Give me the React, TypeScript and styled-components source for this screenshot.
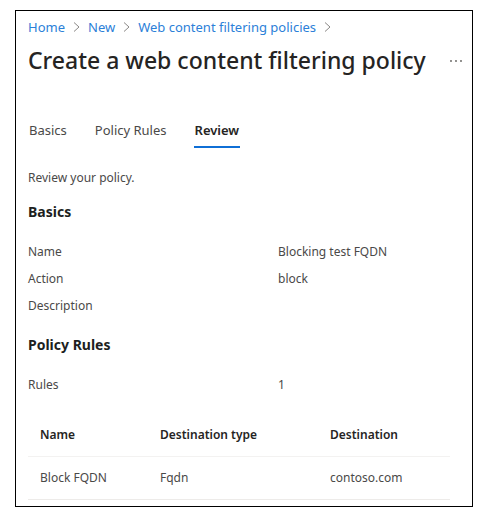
import React from "react";
import styled, { createGlobalStyle } from "styled-components";

const GlobalStyle = createGlobalStyle`
  *, *::before, *::after { box-sizing: border-box; }
  body {
    margin: 0;
    background: #fff;
    color: #4a4948;
    font-family: "Segoe UI", "Noto Sans", sans-serif;
    font-size: 12px;
    line-height: 20px;
  }
`;

const Panel = styled.main`
  margin: 10px 8px 4px 15px;
  border: 1px solid #000;
  padding: 5px 8px 6px 12px;
`;

const Breadcrumb = styled.nav`
  display: flex;
  align-items: center;
  font-size: 13px;
  line-height: 22px;
`;

const Crumb = styled.a`
  color: #2b80d8;
  text-decoration: none;
  white-space: nowrap;
`;

const Chevron = styled.svg`
  flex: none;
  width: 7px;
  height: 10px;
  margin: 0 8px;
  fill: none;
  stroke: #8a8886;
`;

const TitleRow = styled.header`
  display: flex;
  align-items: center;
  justify-content: space-between;
`;

const Title = styled.h1`
  margin: 0;
  color: #252423;
  font-size: 23px;
  font-weight: 500;
  line-height: 44px;
  white-space: nowrap;
`;

const MoreButton = styled.button`
  display: flex;
  border: 0;
  padding: 6px 2px 4px;
  background: none;
  color: #605e5c;
`;

const TabList = styled.div`
  display: flex;
  gap: 26px;
  margin-top: 38px;
`;

const Tab = styled.button<{ $active?: boolean }>`
  border: 0;
  border-bottom: 2px solid ${(p) => (p.$active ? "#0f6fd6" : "transparent")};
  padding: 0 1px 6px;
  background: none;
  color: ${(p) => (p.$active ? "#252423" : "#4a4948")};
  font: inherit;
  font-size: 13px;
  font-weight: ${(p) => (p.$active ? 600 : 400)};
  white-space: nowrap;
`;

const Intro = styled.p`
  margin: 20px 0 13px;
`;

const SectionTitle = styled.h2`
  margin: 0;
  color: #201f1e;
  font-size: 14px;
  font-weight: 700;
  line-height: 22px;
`;

const Details = styled.dl`
  display: grid;
  grid-template-columns: 250px 1fr;
  row-gap: 7px;
  margin: 19px 0 18px;
`;

const Term = styled.dt`
  min-height: 20px;
`;

const Value = styled.dd`
  margin: 0;
`;

const RulesTable = styled.table`
  width: calc(100% - 14px);
  border-collapse: collapse;
  table-layout: fixed;
`;

const Column = styled.col<{ $width?: number }>`
  width: ${(p) => (p.$width ? `${p.$width}px` : "auto")};
`;

const HeadCell = styled.th`
  height: 43px;
  border-bottom: 1px solid #f3f2f1;
  padding: 2px 0 0 12px;
  color: #252423;
  font-weight: 600;
  text-align: left;
`;

const Cell = styled.td`
  height: 43px;
  border-bottom: 1px solid #edebe9;
  padding: 0 0 0 12px;
`;

const crumbs = ["Home", "New", "Web content filtering policies"];
const tabs = ["Basics", "Policy Rules", "Review"];
const basics = [
  ["Name", "Blocking test FQDN"],
  ["Action", "block"],
  ["Description", ""],
];

export default function App() {
  return (
    <>
      <GlobalStyle />
      <Panel>
        <Breadcrumb aria-label="Breadcrumb">
          {crumbs.map((crumb) => (
            <React.Fragment key={crumb}>
              <Crumb href="#">{crumb}</Crumb>
              <Chevron viewBox="0 0 7 10" aria-hidden="true">
                <path d="M1 .5 6 5 1 9.5" />
              </Chevron>
            </React.Fragment>
          ))}
        </Breadcrumb>
        <TitleRow>
          <Title>Create a web content filtering policy</Title>
          <MoreButton type="button" aria-label="More options">
            <svg width="12" height="2" viewBox="0 0 12 2" fill="currentColor" aria-hidden="true">
              <circle cx="1" cy="1" r=".9" />
              <circle cx="6" cy="1" r=".9" />
              <circle cx="11" cy="1" r=".9" />
            </svg>
          </MoreButton>
        </TitleRow>
        <TabList role="tablist">
          {tabs.map((tab) => (
            <Tab key={tab} type="button" role="tab" aria-selected={tab === "Review"} $active={tab === "Review"}>
              {tab}
            </Tab>
          ))}
        </TabList>
        <Intro>Review your policy.</Intro>
        <SectionTitle>Basics</SectionTitle>
        <Details>
          {basics.map(([term, value]) => (
            <React.Fragment key={term}>
              <Term>{term}</Term>
              <Value>{value}</Value>
            </React.Fragment>
          ))}
        </Details>
        <SectionTitle>Policy Rules</SectionTitle>
        <Details>
          <Term>Rules</Term>
          <Value>1</Value>
        </Details>
        <RulesTable>
          <colgroup>
            <Column $width={120} />
            <Column $width={170} />
            <Column />
          </colgroup>
          <thead>
            <tr>
              <HeadCell scope="col">Name</HeadCell>
              <HeadCell scope="col">Destination type</HeadCell>
              <HeadCell scope="col">Destination</HeadCell>
            </tr>
          </thead>
          <tbody>
            <tr>
              <Cell>Block FQDN</Cell>
              <Cell>Fqdn</Cell>
              <Cell>contoso.com</Cell>
            </tr>
          </tbody>
        </RulesTable>
      </Panel>
    </>
  );
}
